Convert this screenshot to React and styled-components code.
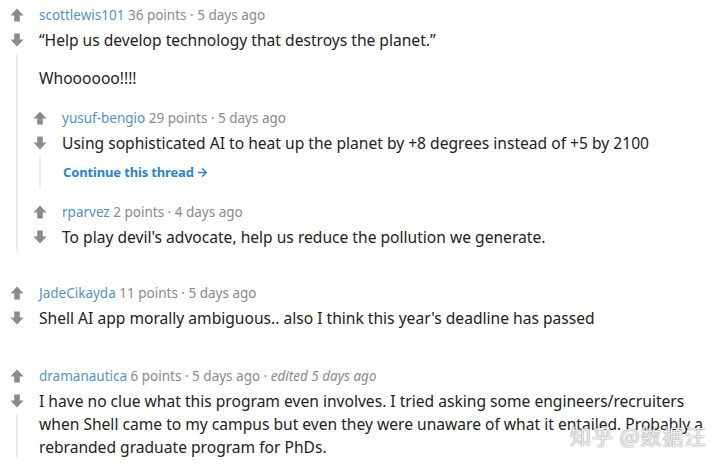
import React from 'react';
import styled, { createGlobalStyle } from 'styled-components';
import { ArrowRight } from 'lucide-react';

const GlobalStyle = createGlobalStyle`
  html, body {
    margin: 0;
    padding: 0;
    background: #fff;
  }
  body {
    font-family: "Noto Sans", "Open Sans", sans-serif;
    color: #222;
  }
`;

const Page = styled.div`
  position: relative;
  width: 720px;
  height: 464px;
  overflow: hidden;
  box-sizing: border-box;
  padding: 5px 2px 0 10px;
  display: flex;
  flex-direction: column;
`;

const CommentRow = styled.div`
  display: flex;
  padding-bottom: 2px;
  margin-top: ${(p) => p.$space || 0}px;
`;

const VoteColumn = styled.div`
  width: 14px;
  flex: 0 0 14px;
  display: flex;
  flex-direction: column;
  align-items: center;
  padding-top: 3px;
`;

const Arrow = styled.svg`
  display: block;
  width: 14px;
  height: 14px;
  margin-bottom: ${(p) => (p.$down ? '0' : '11px')};
  fill: #8b8b8b;
`;

const ThreadLine = styled.div`
  flex: 1;
  width: 2px;
  margin-top: 6px;
  background: #ededed;
`;

const Main = styled.div`
  flex: 1;
  margin-left: 9px;
  min-width: 0;
`;

const Meta = styled.div`
  padding-left: 6px;
  font-size: 13.5px;
  line-height: 20px;
  color: #8a8a8a;
  white-space: nowrap;

  a {
    color: #5692c6;
    text-decoration: none;
  }
  em {
    font-style: italic;
  }
`;

const Body = styled.div`
  padding-left: 6px;
  margin-top: 4px;
  font-size: 15.6px;
  line-height: 23px;
  color: #222;

  p {
    margin: 0 0 15px;
  }
  p:last-child {
    margin-bottom: 0;
  }
`;

const Children = styled.div`
  margin-top: 18px;
  display: flex;
  flex-direction: column;
  gap: 12px;
`;

const Continue = styled.a`
  display: flex;
  align-items: center;
  gap: 2px;
  margin-top: 7px;
  padding: 0 0 6px 7px;
  font-size: 13px;
  line-height: 20px;
  font-weight: 700;
  letter-spacing: -0.15px;
  color: #3182c4;
  text-decoration: none;
`;

const Watermark = styled.div`
  position: absolute;
  left: 570px;
  top: 421px;
  font-family: "Noto Sans CJK SC", sans-serif;
  font-size: 21px;
  line-height: 28px;
  color: rgba(255, 255, 255, 0.92);
  text-shadow: 0 0 1px rgba(0, 0, 0, 0.55), 0 0 2px rgba(0, 0, 0, 0.25);
  letter-spacing: 1px;
  pointer-events: none;
`;

function UpArrow() {
  return (
    <Arrow viewBox="0 0 14 14">
      <path d="M7 0.5 L13.5 7.5 H9.8 V13.5 H4.2 V7.5 H0.5 Z" />
    </Arrow>
  );
}

function DownArrow() {
  return (
    <Arrow $down viewBox="0 0 14 14">
      <path d="M7 13.5 L13.5 6.5 H9.8 V0.5 H4.2 V6.5 H0.5 Z" />
    </Arrow>
  );
}

function Comment({ author, points, age, edited, children, replies, more, space }) {
  return (
    <CommentRow $space={space}>
      <VoteColumn>
        <UpArrow />
        <DownArrow />
        <ThreadLine />
      </VoteColumn>
      <Main>
        <Meta>
          <a href="#">{author}</a> {points} points · {age}
          {edited && (
            <>
              {' · '}
              <em>edited {edited}</em>
            </>
          )}
        </Meta>
        <Body>{children}</Body>
        {more && (
          <Continue href="#">
            Continue this thread
            <ArrowRight size={13} strokeWidth={2.6} />
          </Continue>
        )}
        {replies && <Children>{replies}</Children>}
      </Main>
    </CommentRow>
  );
}

export default function App() {
  return (
    <>
      <GlobalStyle />
      <Page>
        <Comment
          author="scottlewis101"
          points={36}
          age="5 days ago"
          replies={
            <>
              <Comment author="yusuf-bengio" points={29} age="5 days ago" more>
                <p>Using sophisticated AI to heat up the planet by +8 degrees instead of +5 by 2100</p>
              </Comment>
              <Comment author="rparvez" points={2} age="4 days ago">
                <p>To play devil's advocate, help us reduce the pollution we generate.</p>
              </Comment>
            </>
          }
        >
          <p>“Help us develop technology that destroys the planet.”</p>
          <p>Whoooooo!!!!</p>
        </Comment>

        <Comment author="JadeCikayda" points={11} age="5 days ago" space={29}>
          <p>Shell AI app morally ambiguous.. also I think this year's deadline has passed</p>
        </Comment>

        <Comment author="dramanautica" points={6} age="5 days ago" edited="5 days ago" space={33}>
          <p>
            I have no clue what this program even involves. I tried asking some engineers/recruiters
            when Shell came to my campus but even they were unaware of what it entailed. Probably a
            rebranded graduate program for PhDs.
          </p>
        </Comment>

        <Watermark>知乎 @数据汪</Watermark>
      </Page>
    </>
  );
}
